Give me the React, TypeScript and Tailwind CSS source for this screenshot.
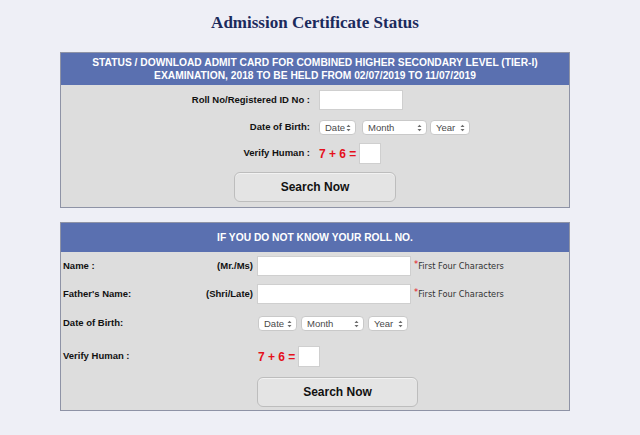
import React from "react";

const Arrows = () => (
  <svg width="5" height="8" viewBox="0 0 5 8" className="shrink-0">
    <path d="M0.5 3 L2.5 0.8 L4.5 3 Z" fill="#6b6b6b" />
    <path d="M0.5 5 L2.5 7.2 L4.5 5 Z" fill="#6b6b6b" />
  </svg>
);

const Select = ({ label, w }: { label: string; w: string }) => (
  <div
    className={`${w} h-[15px] rounded-[4px] border border-[#c9c9c9] bg-white flex items-center justify-between pl-[5px] pr-[4px] text-[9.5px] font-normal text-[#4a4a4a] font-['Liberation_Sans',sans-serif] leading-none`}
  >
    <span>{label}</span>
    <Arrows />
  </div>
);

const Captcha = () => (
  <span className="text-[12px] font-bold text-[#e5101b] font-['Liberation_Sans',sans-serif] leading-none">
    7 + 6 =
  </span>
);

const Button = ({ w }: { w: string }) => (
  <div
    className={`${w} h-[30px] rounded-[6px] border border-[#bdbdbd] bg-[#e4e4e4] flex items-center justify-center text-[12px] font-bold text-[#111] font-['Liberation_Sans',sans-serif] shadow-[inset_0_1px_0_#f2f2f2]`}
  >
    Search Now
  </div>
);

const Hint = () => (
  <span className="ml-[3px] flex items-start mt-[1px] font-normal text-[8.25px] text-[#333] font-['DejaVu_Sans',sans-serif] leading-none">
    <span className="text-[#e5101b] -mt-[2px]">*</span>
    <span>First Four Characters</span>
  </span>
);

export default function App() {
  return (
    <div className="w-[640px] h-[435px] bg-[#eeeff6] overflow-hidden font-['Liberation_Sans',sans-serif]">
      <h1 className="w-[630px] pt-[13px] h-[33px] text-center font-['Liberation_Serif',serif] font-bold text-[17px] leading-[20px] text-[#1b2a5c]">
        Admission Certificate Status
      </h1>

      {/* Box 1 */}
      <div className="mt-[19px] ml-[60px] w-[510px] border border-[#8e93a6] bg-[#dddddd]">
        <div className="h-[32px] bg-[#5a70b0] flex flex-col items-center justify-center text-white font-bold text-[10.25px] leading-[13px] text-center">
          <div>STATUS / DOWNLOAD ADMIT CARD FOR COMBINED HIGHER SECONDARY LEVEL (TIER-I)</div>
          <div>EXAMINATION, 2018 TO BE HELD FROM 02/07/2019 TO 11/07/2019</div>
        </div>
        <div className="pt-[5px] pb-[5px] flex flex-col text-[9.5px] font-bold text-[#111]">
          <div className="flex items-center h-[20px]">
            <span className="w-[252px] text-right pr-[3px]">Roll No/Registered ID No :</span>
            <div className="ml-[6px] w-[84px] h-[20px] bg-white border border-[#cfcfcf]" />
          </div>
          <div className="flex items-center mt-[10px] h-[15px]">
            <span className="w-[252px] text-right pr-[3px]">Date of Birth:</span>
            <div className="ml-[6px] flex">
              <Select label="Date" w="w-[37px]" />
              <div className="ml-[6px]">
                <Select label="Month" w="w-[65px]" />
              </div>
              <div className="ml-[3px]">
                <Select label="Year" w="w-[40px]" />
              </div>
            </div>
          </div>
          <div className="flex items-center mt-[8px] h-[21px]">
            <span className="w-[252px] text-right pr-[3px]">Verify Human :</span>
            <div className="ml-[6px] flex items-center gap-[3px]">
              <Captcha />
              <div className="w-[22px] h-[21px] bg-white border border-[#cfcfcf]" />
            </div>
          </div>
          <div className="mt-[8px] flex justify-center">
            <Button w="w-[162px]" />
          </div>
        </div>
      </div>

      {/* Box 2 */}
      <div className="mt-[14px] ml-[60px] w-[510px] border border-[#8e93a6] bg-[#dddddd]">
        <div className="h-[29px] bg-[#5a70b0] flex items-center justify-center text-white font-bold text-[10.25px]">
          IF YOU DO NOT KNOW YOUR ROLL NO.
        </div>
        <div className="pt-[4px] pb-[3px] flex flex-col text-[9.5px] font-bold text-[#111]">
          <div className="flex items-center h-[20px]">
            <span className="w-[110px] pl-[2px]">Name :</span>
            <span className="w-[82px] text-right">(Mr./Ms)</span>
            <div className="ml-[4px] w-[154px] h-[20px] bg-white border border-[#cfcfcf]" />
            <Hint />
          </div>
          <div className="flex items-center mt-[8px] h-[20px]">
            <span className="w-[110px] pl-[2px]">Father's Name:</span>
            <span className="w-[82px] text-right">(Shri/Late)</span>
            <div className="ml-[4px] w-[154px] h-[20px] bg-white border border-[#cfcfcf]" />
            <Hint />
          </div>
          <div className="flex items-center mt-[12px] h-[15px]">
            <span className="w-[196px] pl-[2px]">Date of Birth:</span>
            <div className="ml-[1px] flex gap-[4px]">
              <Select label="Date" w="w-[39px]" />
              <Select label="Month" w="w-[63px]" />
              <Select label="Year" w="w-[40px]" />
            </div>
          </div>
          <div className="flex items-center mt-[15px] h-[21px]">
            <span className="w-[196px] pl-[2px]">Verify Human :</span>
            <div className="ml-[1px] flex items-center gap-[3px]">
              <Captcha />
              <div className="w-[22px] h-[21px] bg-white border border-[#cfcfcf]" />
            </div>
          </div>
          <div className="mt-[10px] pl-[196px]">
            <Button w="w-[161px]" />
          </div>
        </div>
      </div>
    </div>
  );
}
